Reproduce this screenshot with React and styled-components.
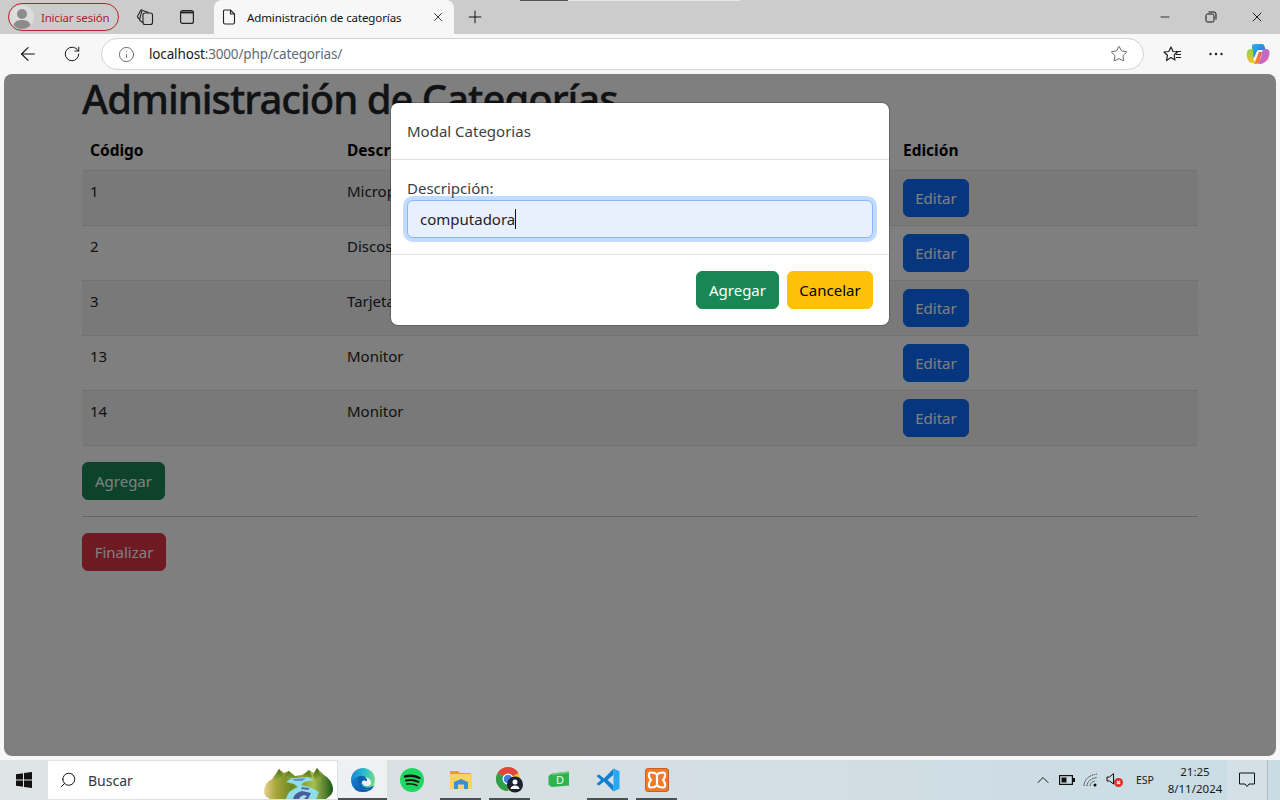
import React from "react";
import styled, { createGlobalStyle } from "styled-components";
import { ArrowLeft, RotateCw, Info, Star, X, Plus, Minus, Search, ChevronUp } from "lucide-react";

const GlobalStyle = createGlobalStyle`
  html, body { margin: 0; padding: 0; }
  body { font-family: "Noto Sans", "Open Sans", "Liberation Sans", sans-serif; color: #212529; }
  * { box-sizing: border-box; }
`;

const Screen = styled.div`
  position: relative;
  width: 1280px;
  height: 800px;
  overflow: hidden;
  display: flex;
  flex-direction: column;
  background: #f7f7f7;
`;

/* ---------- browser chrome ---------- */
const TabStrip = styled.div`
  height: 34px;
  flex: none;
  display: flex;
  align-items: center;
  background: #cccccc;
  padding-left: 8px;
`;

const WindowEdge = styled.div`
  position: absolute;
  top: 0;
  left: 520px;
  width: 220px;
  height: 1px;
  background: linear-gradient(to right, #555 0 48px, #e6e6e6 48px);
`;

const ProfilePill = styled.div`
  width: 111px;
  height: 28px;
  margin-right: 5px;
  border: 1px solid #b3262b;
  border-radius: 14px;
  display: flex;
  align-items: center;
  gap: 7px;
  padding-left: 1px;
  font-size: 11.5px;
  letter-spacing: -0.2px;
  color: #a4262c;
  white-space: nowrap;
`;

const StripIcon = styled.div`
  width: 42px;
  height: 34px;
  flex: none;
  display: flex;
  align-items: center;
  justify-content: center;
  color: #111;
`;

const Tab = styled.div`
  width: 240px;
  height: 34px;
  flex: none;
  margin-left: 6px;
  background: #f7f7f7;
  border-radius: 8px 8px 0 0;
  display: flex;
  align-items: center;
  padding: 0 9px 0 8px;
  gap: 11px;
  font-size: 11.5px;
  letter-spacing: -0.1px;
  color: #111;
  white-space: nowrap;
`;

const TabTitle = styled.span`
  flex: 1;
`;

const WindowControls = styled.div`
  margin-left: auto;
  display: flex;
  align-items: center;
`;

const WindowButton = styled.div`
  width: 46px;
  height: 34px;
  display: flex;
  align-items: center;
  justify-content: center;
  color: #000;
`;

const Toolbar = styled.div`
  height: 40px;
  flex: none;
  display: flex;
  align-items: center;
  padding-left: 6px;
  padding-right: 0;
`;

const ToolButton = styled.div`
  width: ${(p) => p.$w || 44}px;
  height: 32px;
  flex: none;
  display: flex;
  align-items: center;
  justify-content: center;
  color: #111;
`;

const AddressBar = styled.div`
  width: 1043px;
  height: 32px;
  flex: none;
  margin-left: 7px;
  margin-right: 7px;
  background: #fff;
  border: 1px solid #d2d2d2;
  border-radius: 16px;
  display: flex;
  align-items: center;
  padding: 0 15px 0 16px;
  font-size: 13.5px;
  letter-spacing: -0.15px;
`;

const UrlHost = styled.span`
  margin-left: 14px;
  color: #1a1a1a;
`;

const UrlRest = styled.span`
  color: #5f6a72;
  flex: 1;
`;

/* ---------- page ---------- */
const Viewport = styled.div`
  position: relative;
  flex: 1;
  margin: 0 4px 4px;
  background: #fff;
  border-radius: 8px;
  overflow: hidden;
`;

const Container = styled.div`
  width: 1116px;
  margin: 0 auto;
  font-size: 16px;
  line-height: 24px;
`;

const Heading = styled.h1`
  margin: 0 0 8px;
  padding-top: 2px;
  font-size: 40px;
  line-height: 46px;
  font-weight: 500;
  letter-spacing: -1px;
  -webkit-text-stroke: 0.4px #212529;
`;

const Table = styled.table`
  width: 100%;
  border-collapse: collapse;
  table-layout: fixed;
  margin-bottom: 16px;
`;

const Th = styled.th`
  width: ${(p) => p.$w || "auto"};
  padding: 8px;
  height: 40px;
  text-align: left;
  font-weight: 700;
  color: #000;
  border-bottom: 1px solid #dee2e6;
  font-size: 15.5px;
`;

const Row = styled.tr`
  background: ${(p) => (p.$odd ? "#f2f2f2" : "#fff")};
  border-bottom: 1px solid #dee2e6;
`;

const Td = styled.td`
  padding: 8px;
  height: 55px;
  vertical-align: top;
  font-size: 15px;
`;

const Button = styled.button`
  display: block;
  height: 38px;
  width: ${(p) => p.$w}px;
  padding: 0;
  border: 1px solid ${(p) => p.$bg};
  border-radius: 6px;
  background: ${(p) => p.$bg};
  color: ${(p) => p.$fg || "#fff"};
  font: inherit;
  font-size: 15px;
  text-align: center;
`;

const Divider = styled.hr`
  margin: 16px 0;
  border: 0;
  border-top: 1px solid #212529;
  opacity: 0.25;
`;

const Backdrop = styled.div`
  position: absolute;
  inset: 0;
  background: rgba(0, 0, 0, 0.5);
`;

const Modal = styled.div`
  position: absolute;
  top: 28px;
  left: 386px;
  width: 500px;
  background: #fff;
  border: 1px solid rgba(0, 0, 0, 0.2);
  background-clip: padding-box;
  border-radius: 8px;
  font-size: 15px;
  line-height: 24px;
`;

const ModalHeader = styled.div`
  height: 57px;
  padding: 16px;
  border-bottom: 1px solid #dee2e6;
  color: #3a3f44;
`;

const ModalBody = styled.div`
  height: 95px;
  padding: 16px;
  border-bottom: 1px solid #dee2e6;
`;

const FieldLabel = styled.label`
  display: block;
  height: 24px;
  color: #3a3f44;
`;

const Field = styled.div`
  height: 38px;
  background: #e8f0fe;
  border: 1px solid #86b7fe;
  border-radius: 6px;
  box-shadow: 0 0 0 4px rgba(13, 110, 253, 0.25);
  padding: 6px 12px;
  display: flex;
  align-items: center;
  color: #212529;
`;

const Caret = styled.span`
  width: 1px;
  height: 20px;
  background: #111;
`;

const ModalFooter = styled.div`
  height: 70px;
  padding: 16px;
  display: flex;
  justify-content: flex-end;
  gap: 8px;
`;

/* ---------- taskbar ---------- */
const Taskbar = styled.div`
  height: 40px;
  flex: none;
  display: flex;
  align-items: stretch;
  background: linear-gradient(to right, #dfe4e6 0%, #d6dfe4 45%, #c9dce4 100%);
`;

const StartButton = styled.div`
  width: 48px;
  flex: none;
  display: flex;
  align-items: center;
  justify-content: center;
`;

const SearchBox = styled.div`
  width: 289px;
  flex: none;
  margin: 1px 0;
  background: #fff;
  display: flex;
  align-items: center;
  padding-left: 11px;
  font-size: 14px;
  color: #2b3a44;
  gap: 11px;
  position: relative;
`;

const SearchArt = styled.svg`
  position: absolute;
  right: 3px;
  bottom: 0;
`;

const AppTile = styled.div`
  width: 49px;
  flex: none;
  display: flex;
  align-items: center;
  justify-content: center;
  position: relative;
  background: ${(p) => (p.$active ? "#eef0f2" : "transparent")};
  &::after {
    content: "";
    display: ${(p) => (p.$running ? "block" : "none")};
    position: absolute;
    bottom: 0;
    left: ${(p) => (p.$active ? 0 : 4)}px;
    right: ${(p) => (p.$active ? 0 : 4)}px;
    height: 2px;
    background: #4a4f54;
  }
`;

const Tiles = styled.div`
  display: flex;
  margin-left: 1px;
`;

const Tray = styled.div`
  margin-left: auto;
  display: flex;
  align-items: center;
`;

const TrayIcon = styled.div`
  width: ${(p) => p.$w || 24}px;
  display: flex;
  align-items: center;
  justify-content: center;
  color: #1a1a1a;
`;

const TrayLang = styled.div`
  width: 36px;
  text-align: center;
  font-size: 10.5px;
  color: #1a1a1a;
`;

const Clock = styled.div`
  width: 64px;
  text-align: center;
  font-size: 11.5px;
  line-height: 17px;
  color: #1a1a1a;
`;

const NotifyButton = styled.div`
  width: 40px;
  height: 40px;
  display: flex;
  align-items: center;
  justify-content: center;
  background: #d3e0e6;
`;

const DesktopEdge = styled.div`
  width: 13px;
  height: 40px;
  border-left: 1px solid #aebcc4;
`;

/* ---------- drawings ---------- */
const Avatar = () => (
  <svg width="24" height="24" viewBox="0 0 24 24">
    <circle cx="12" cy="12" r="12" fill="#dcdcdc" />
    <circle cx="12" cy="9" r="5" fill="#8c8c8c" />
    <path d="M3.5 20 C5 15.5 9 15 12 15 C15 15 19 15.5 20.5 20 C18 23 15 24 12 24 C9 24 6 23 3.5 20 Z" fill="#8c8c8c" />
  </svg>
);

const WorkspacesIcon = () => (
  <svg width="18" height="18" viewBox="0 0 18 18" fill="none" stroke="#222" strokeWidth="1.1">
    <rect x="7" y="5" width="9.5" height="11.5" rx="2" />
    <path d="M7 14.5 L4.2 12.8 Q3.5 12 3.7 11 L5.5 4 Q6 2.5 7.5 2.8 L12.5 4.5" />
    <path d="M4 11.5 L1.8 9.5 Q1.2 8.8 1.6 8 L4.5 2.8 Q5.2 1.5 6.5 2" />
  </svg>
);

const VerticalTabsIcon = () => (
  <svg width="16" height="16" viewBox="0 0 16 16" fill="none" stroke="#222" strokeWidth="1.2">
    <rect x="1.6" y="1.6" width="12.8" height="12.8" rx="2" />
    <path d="M2 2.5 H14 V4.4 H2 Z" fill="#222" stroke="none" />
  </svg>
);

const DocIcon = () => (
  <svg width="14" height="16" viewBox="0 0 14 16" fill="none" stroke="#222" strokeWidth="1.1">
    <path d="M2.5 1 H8.5 L12.5 5 V13.5 Q12.5 15 11 15 H3 Q1.5 15 1.5 13.5 V2 Q1.5 1 2.5 1 Z" />
    <path d="M8.5 1 V5 H12.5" />
  </svg>
);

const RestoreIcon = () => (
  <svg width="12" height="12" viewBox="0 0 12 12" fill="none" stroke="#111" strokeWidth="1">
    <rect x="1" y="3" width="8" height="8" rx="1.5" />
    <path d="M3.5 1 H9 Q11 1 11 3 V8.5" />
  </svg>
);

const FavoritesIcon = () => (
  <svg width="20" height="18" viewBox="0 0 20 18" fill="none" stroke="#222" strokeWidth="1.2">
    <path d="M8 2 L10 6.5 L14.5 7 L11.2 10 L12 15 L8 12.6 L3.5 15.5 L4.5 10.2 L1 7 L5.8 6.5 Z" strokeLinejoin="round" />
    <path d="M13 6.5 H18 M13 9.5 H18 M13 12.5 H18" />
  </svg>
);

const MoreIcon = () => (
  <svg width="16" height="4" viewBox="0 0 16 4" fill="#222">
    <circle cx="2.5" cy="2" r="1.2" />
    <circle cx="8" cy="2" r="1.2" />
    <circle cx="13.5" cy="2" r="1.2" />
  </svg>
);

const CopilotIcon = () => (
  <svg width="24" height="22" viewBox="0 0 24 22">
    <defs>
      <linearGradient id="copA" x1="0" y1="0" x2="1" y2="1">
        <stop offset="0" stopColor="#2fb5e8" />
        <stop offset="1" stopColor="#2a5fe0" />
      </linearGradient>
      <linearGradient id="copB" x1="0" y1="0" x2="1" y2="1">
        <stop offset="0" stopColor="#a070f0" />
        <stop offset="1" stopColor="#f060a0" />
      </linearGradient>
      <linearGradient id="copC" x1="0" y1="0" x2="0" y2="1">
        <stop offset="0" stopColor="#8fd14f" />
        <stop offset="1" stopColor="#f5c020" />
      </linearGradient>
      <linearGradient id="copD" x1="0" y1="0" x2="1" y2="0">
        <stop offset="0" stopColor="#f5a020" />
        <stop offset="1" stopColor="#f05050" />
      </linearGradient>
    </defs>
    <path d="M8 1 H16 Q18 1 18.5 3 L19.5 7 H13 Q11 7 10.5 9 L8 15 Q6 13 6 11 L6 3 Q6 1 8 1 Z" fill="url(#copA)" />
    <path d="M18 6 H20 Q24 6 23.5 11 Q23 16 19 19 Q17 21 14 21 H12 L15 14 L16 9 Q17 6 18 6 Z" fill="url(#copB)" />
    <path d="M5 6 H7 L7.5 16 L9 20 H6 Q3 20 1.5 16 Q0 12 1 9 Q2 6 5 6 Z" fill="url(#copC)" />
    <path d="M8 21 L13 9 L16 9 L13 19 Q12 21 10 21 Z" fill="url(#copD)" />
  </svg>
);

const WindowsLogo = () => (
  <svg width="16" height="16" viewBox="0 0 16 16" fill="#111">
    <path d="M0 2.3 L7 1.3 V7.5 H0 Z M8 1.1 L16 0 V7.5 H8 Z M0 8.5 H7 V14.7 L0 13.7 Z M8 8.5 H16 V16 L8 14.9 Z" />
  </svg>
);

const RiverArt = () => (
  <SearchArt width="70" height="32" viewBox="0 0 70 32">
    <defs>
      <linearGradient id="hill" x1="0" y1="0" x2="1" y2="0">
        <stop offset="0" stopColor="#e6d28e" />
        <stop offset="0.18" stopColor="#a7a33a" />
        <stop offset="0.4" stopColor="#6c8a1e" />
        <stop offset="0.72" stopColor="#a8bd4e" />
        <stop offset="1" stopColor="#1c5618" />
      </linearGradient>
      <linearGradient id="ridge" x1="0" y1="0" x2="0" y2="1">
        <stop offset="0" stopColor="#3f5f12" />
        <stop offset="1" stopColor="#9bb344" />
      </linearGradient>
    </defs>
    <path d="M0 24 Q1 15 8 12 L15 2 L20 6 L25 4 L31 9 L38 8 L45 3 L50 6 L53 1 L60 8 Q68 13 69 21 Q70 27 62 32 H6 Q0 30 0 24 Z" fill="url(#hill)" />
    <path d="M15 2 L19 9 L13 14 L10 12 Z M25 4 L29 11 L24 13 L21 9 Z M45 3 L48 10 L41 12 L39 9 Z M53 1 L58 11 L51 14 L49 8 Z" fill="url(#ridge)" />
    <path d="M22 32 Q24 23 34 20 L30 17 L22 15 L28 11 L44 10 L50 13 L40 15 L37 18 L46 20 L55 25 L52 32 Z" fill="#8fdfe8" />
    <path d="M28 12 L42 11 L38 14 L31 14 Z" fill="#6f8fcf" />
    <path d="M29 32 Q30 26 38 24 L47 26 L44 32 Z" fill="#4a5b9c" />
    <path d="M35 32 Q36 29 40 28 L43 29 L40 32 Z" fill="#a5dbe6" />
    <path d="M38 20 L46 21 L44 23 L37 22 Z" fill="#5a6fae" />
  </SearchArt>
);

const EdgeLogo = () => (
  <svg width="24" height="24" viewBox="0 0 24 24">
    <defs>
      <linearGradient id="edgeA" x1="0" y1="0.3" x2="1" y2="0.5">
        <stop offset="0" stopColor="#1a86d8" />
        <stop offset="0.55" stopColor="#2cc0c8" />
        <stop offset="1" stopColor="#78dc86" />
      </linearGradient>
      <linearGradient id="edgeB" x1="0" y1="0" x2="1" y2="1">
        <stop offset="0" stopColor="#1580d8" />
        <stop offset="1" stopColor="#0c4f9c" />
      </linearGradient>
    </defs>
    <circle cx="12" cy="12" r="12" fill="url(#edgeA)" />
    <path d="M0.5 14 Q2 9 7.5 8.5 Q5 13 7.5 17.5 Q10.5 22 17 21.5 Q20.5 21 23 17.5 Q21 24 12 24 Q2 24 0.5 14 Z" fill="url(#edgeB)" />
    <path d="M7.5 8.5 Q10 7 13.5 8.5 Q16.5 10 16 13.5 Q13 11.5 11 13.5 Q9.5 16 12 18.5 Q14 20 18 19.5 Q21 19 23 17.5 Q21 21 17 21.5 Q10.5 22 7.5 17.5 Q5 13 7.5 8.5 Z" fill="#0e5fae" />
    <path d="M11 13.5 Q13 11.5 16 13.5 Q16.5 10.5 14.5 9 Q19 10 20 14 Q20.5 17 17 18 Q14 18.5 12 16.5 Q10.5 15 11 13.5 Z" fill="#eef0f2" />
  </svg>
);

const SpotifyLogo = () => (
  <svg width="24" height="24" viewBox="0 0 24 24" fill="none" stroke="#111" strokeLinecap="round">
    <circle cx="12" cy="12" r="12" fill="#1ed760" stroke="none" />
    <path d="M5 8.5 Q12.5 6.5 19.5 10" strokeWidth="2.4" />
    <path d="M6 12.5 Q12.5 10.8 18.3 13.8" strokeWidth="2" />
    <path d="M6.8 16 Q12 15 17 17.4" strokeWidth="1.6" />
  </svg>
);

const ExplorerLogo = () => (
  <svg width="24" height="22" viewBox="0 0 24 22">
    <path d="M1 3 Q1 2 2 2 H9 L11 4 H21 Q22 4 22 5 V7 H1 Z" fill="#e0a020" />
    <rect x="1" y="5" width="22" height="15" rx="1" fill="#fbd45f" />
    <path d="M5 20 V13 L12 10 L19 13 V20 H15 V15.5 H9 V20 Z" fill="#3b8fd8" />
  </svg>
);

const ChromeLogo = () => (
  <svg width="28" height="26" viewBox="0 0 28 26">
    <circle cx="12" cy="12" r="12" fill="#f1c232" />
    <path d="M12 12 L1.6 6 A12 12 0 0 1 22.4 6 Z" fill="#e2453c" />
    <path d="M12 12 L1.6 6 A12 12 0 0 0 12 24 Z" fill="#2e9e4f" />
    <circle cx="12" cy="12" r="5.5" fill="#fff" />
    <circle cx="12" cy="12" r="4.3" fill="#3f7fe6" />
    <circle cx="19" cy="17.5" r="8" fill="#1a2230" />
    <circle cx="19" cy="15" r="2.5" fill="#fff" />
    <path d="M14.5 22 Q15 18.5 19 18.5 Q23 18.5 23.5 22 Z" fill="#fff" />
  </svg>
);

const DLogo = () => (
  <svg width="22" height="18" viewBox="0 0 22 18">
    <path d="M4 2.5 L21 0.5 V14.5 L4 16 L0.5 14 V5 Z" fill="#2fb350" />
    <path d="M4 2.5 L21 0.5 V2 L4 4 Z" fill="#6bd07e" />
    <text x="12" y="13" textAnchor="middle" fontSize="11" fontFamily="Noto Sans, sans-serif" fill="#e8fbe8">D</text>
  </svg>
);

const VsCodeLogo = () => (
  <svg width="24" height="24" viewBox="0 0 24 24">
    <path d="M17.5 0.5 L8 10.5 L3 6.5 L0.5 8 L5 12 L0.5 16 L3 17.5 L8 13.5 L17.5 23.5 V17.2 L11.5 12 L17.5 6.8 Z" fill="#0f7fd2" />
    <path d="M17.5 0.5 L23.5 3.3 V20.7 L17.5 23.5 Z" fill="#24a9f2" />
  </svg>
);

const XamppLogo = () => (
  <svg width="24" height="24" viewBox="0 0 24 24" fill="none">
    <rect x="0.5" y="0.5" width="23" height="23" rx="2.5" fill="#ef7a2a" stroke="#c9601c" />
    <path
      d="M6 4.5 Q10 4.5 12 6.5 Q14 4.5 18 4.5 Q20.5 4.5 20 8 Q19.5 10.5 18 12 Q19.5 13.5 20 16 Q20.5 19.5 18 19.5 Q14 19.5 12 17.5 Q10 19.5 6 19.5 Q3.5 19.5 4 16 Q4.5 13.5 6 12 Q4.5 10.5 4 8 Q3.5 4.5 6 4.5 Z"
      stroke="#fff"
      strokeWidth="2.2"
    />
    <path d="M12 6.5 V17.5" stroke="#fff" strokeWidth="2.2" />
  </svg>
);

const BatteryIcon = () => (
  <svg width="16" height="10" viewBox="0 0 16 10" fill="none">
    <rect x="0.6" y="0.6" width="12.8" height="8.8" stroke="#111" strokeWidth="1.2" />
    <rect x="2.5" y="2.5" width="5" height="5" fill="#111" />
    <rect x="14" y="3" width="2" height="4" fill="#111" />
  </svg>
);

const WifiIcon = () => (
  <svg width="16" height="14" viewBox="0 0 16 14" fill="none" stroke="#333" strokeWidth="1">
    <path d="M1 13 Q1.5 3 14 1" strokeDasharray="1.5 0.8" />
    <path d="M4 13 Q4.5 6 14 4.5" strokeDasharray="1.5 0.8" />
    <path d="M7 13 Q7.5 9 12 8" strokeDasharray="1.5 0.8" />
    <circle cx="12" cy="12" r="1.5" fill="#111" stroke="none" />
  </svg>
);

const MutedIcon = () => (
  <svg width="18" height="16" viewBox="0 0 18 16" fill="none">
    <path d="M1 5 H3.5 L7.5 1.5 V12 L3.5 9 H1 Z" stroke="#111" strokeWidth="1" />
    <circle cx="12.5" cy="10.5" r="4.5" fill="#e02b2b" />
    <path d="M10.8 8.8 L14.2 12.2 M14.2 8.8 L10.8 12.2" stroke="#fff" strokeWidth="1.2" />
  </svg>
);

const NotificationIcon = () => (
  <svg width="16" height="16" viewBox="0 0 16 16" fill="none" stroke="#111" strokeWidth="1">
    <path d="M0.5 1 H15.5 V12 H10 L8 14.5 L6 12 H0.5 Z" />
  </svg>
);

const rows = [
  { id: 1, name: "Microprocesador" },
  { id: 2, name: "Discos duros" },
  { id: 3, name: "Tarjetas de video" },
  { id: 13, name: "Monitor" },
  { id: 14, name: "Monitor" },
];

const Page = () => (
  <Container>
    <Heading>Administración de Categorías</Heading>
    <Table>
      <thead>
        <tr>
          <Th $w="257px">Código</Th>
          <Th $w="556px">Descripción</Th>
          <Th>Edición</Th>
        </tr>
      </thead>
      <tbody>
        {rows.map((r, i) => (
          <Row key={r.id} $odd={i % 2 === 0}>
            <Td>{r.id}</Td>
            <Td>{r.name}</Td>
            <Td>
              <Button $bg="#0d6efd" $w={66}>Editar</Button>
            </Td>
          </Row>
        ))}
      </tbody>
    </Table>
    <Button $bg="#198754" $w={83}>Agregar</Button>
    <Divider />
    <Button $bg="#dc3545" $w={84}>Finalizar</Button>
  </Container>
);

const CategoryModal = () => (
  <Modal>
    <ModalHeader>Modal Categorias</ModalHeader>
    <ModalBody>
      <FieldLabel>Descripción:</FieldLabel>
      <Field>
        computadora
        <Caret />
      </Field>
    </ModalBody>
    <ModalFooter>
      <Button $bg="#198754" $w={83}>Agregar</Button>
      <Button $bg="#ffc107" $fg="#000" $w={86}>Cancelar</Button>
    </ModalFooter>
  </Modal>
);

export default function App() {
  return (
    <Screen>
      <GlobalStyle />
      <TabStrip>
        <ProfilePill>
          <Avatar />
          Iniciar sesión
        </ProfilePill>
        <StripIcon><WorkspacesIcon /></StripIcon>
        <StripIcon><VerticalTabsIcon /></StripIcon>
        <Tab>
          <DocIcon />
          <TabTitle>Administración de categorías</TabTitle>
          <X size={14} strokeWidth={1.4} />
        </Tab>
        <StripIcon><Plus size={20} strokeWidth={1.2} /></StripIcon>
        <WindowControls>
          <WindowButton><Minus size={14} strokeWidth={1.3} /></WindowButton>
          <WindowButton><RestoreIcon /></WindowButton>
          <WindowButton><X size={16} strokeWidth={1.3} /></WindowButton>
        </WindowControls>
      </TabStrip>
      <WindowEdge />
      <Toolbar>
        <ToolButton><ArrowLeft size={22} strokeWidth={1.2} /></ToolButton>
        <ToolButton><RotateCw size={18} strokeWidth={1.3} /></ToolButton>
        <AddressBar>
          <Info size={17} strokeWidth={1.2} color="#555" />
          <UrlHost>localhost</UrlHost>
          <UrlRest>:3000/php/categorias/</UrlRest>
          <Star size={18} strokeWidth={1.2} color="#555" />
        </AddressBar>
        <ToolButton $w={44}><FavoritesIcon /></ToolButton>
        <ToolButton $w={42}><MoreIcon /></ToolButton>
        <ToolButton $w={42}><CopilotIcon /></ToolButton>
      </Toolbar>
      <Viewport>
        <Page />
        <Backdrop />
        <CategoryModal />
      </Viewport>
      <Taskbar>
        <StartButton><WindowsLogo /></StartButton>
        <SearchBox>
          <Search size={18} strokeWidth={1.3} color="#111" style={{ transform: "scaleX(-1)" }} />
          <span>Buscar</span>
          <RiverArt />
        </SearchBox>
        <Tiles>
          <AppTile $active $running><EdgeLogo /></AppTile>
          <AppTile><SpotifyLogo /></AppTile>
          <AppTile $running><ExplorerLogo /></AppTile>
          <AppTile $running><ChromeLogo /></AppTile>
          <AppTile><DLogo /></AppTile>
          <AppTile $running><VsCodeLogo /></AppTile>
          <AppTile $running><XamppLogo /></AppTile>
        </Tiles>
        <Tray>
          <TrayIcon><ChevronUp size={20} strokeWidth={1.2} /></TrayIcon>
          <TrayIcon><BatteryIcon /></TrayIcon>
          <TrayIcon><WifiIcon /></TrayIcon>
          <TrayIcon><MutedIcon /></TrayIcon>
          <TrayLang>ESP</TrayLang>
          <Clock>
            21:25
            <br />
            8/11/2024
          </Clock>
          <NotifyButton><NotificationIcon /></NotifyButton>
          <DesktopEdge />
        </Tray>
      </Taskbar>
    </Screen>
  );
}
